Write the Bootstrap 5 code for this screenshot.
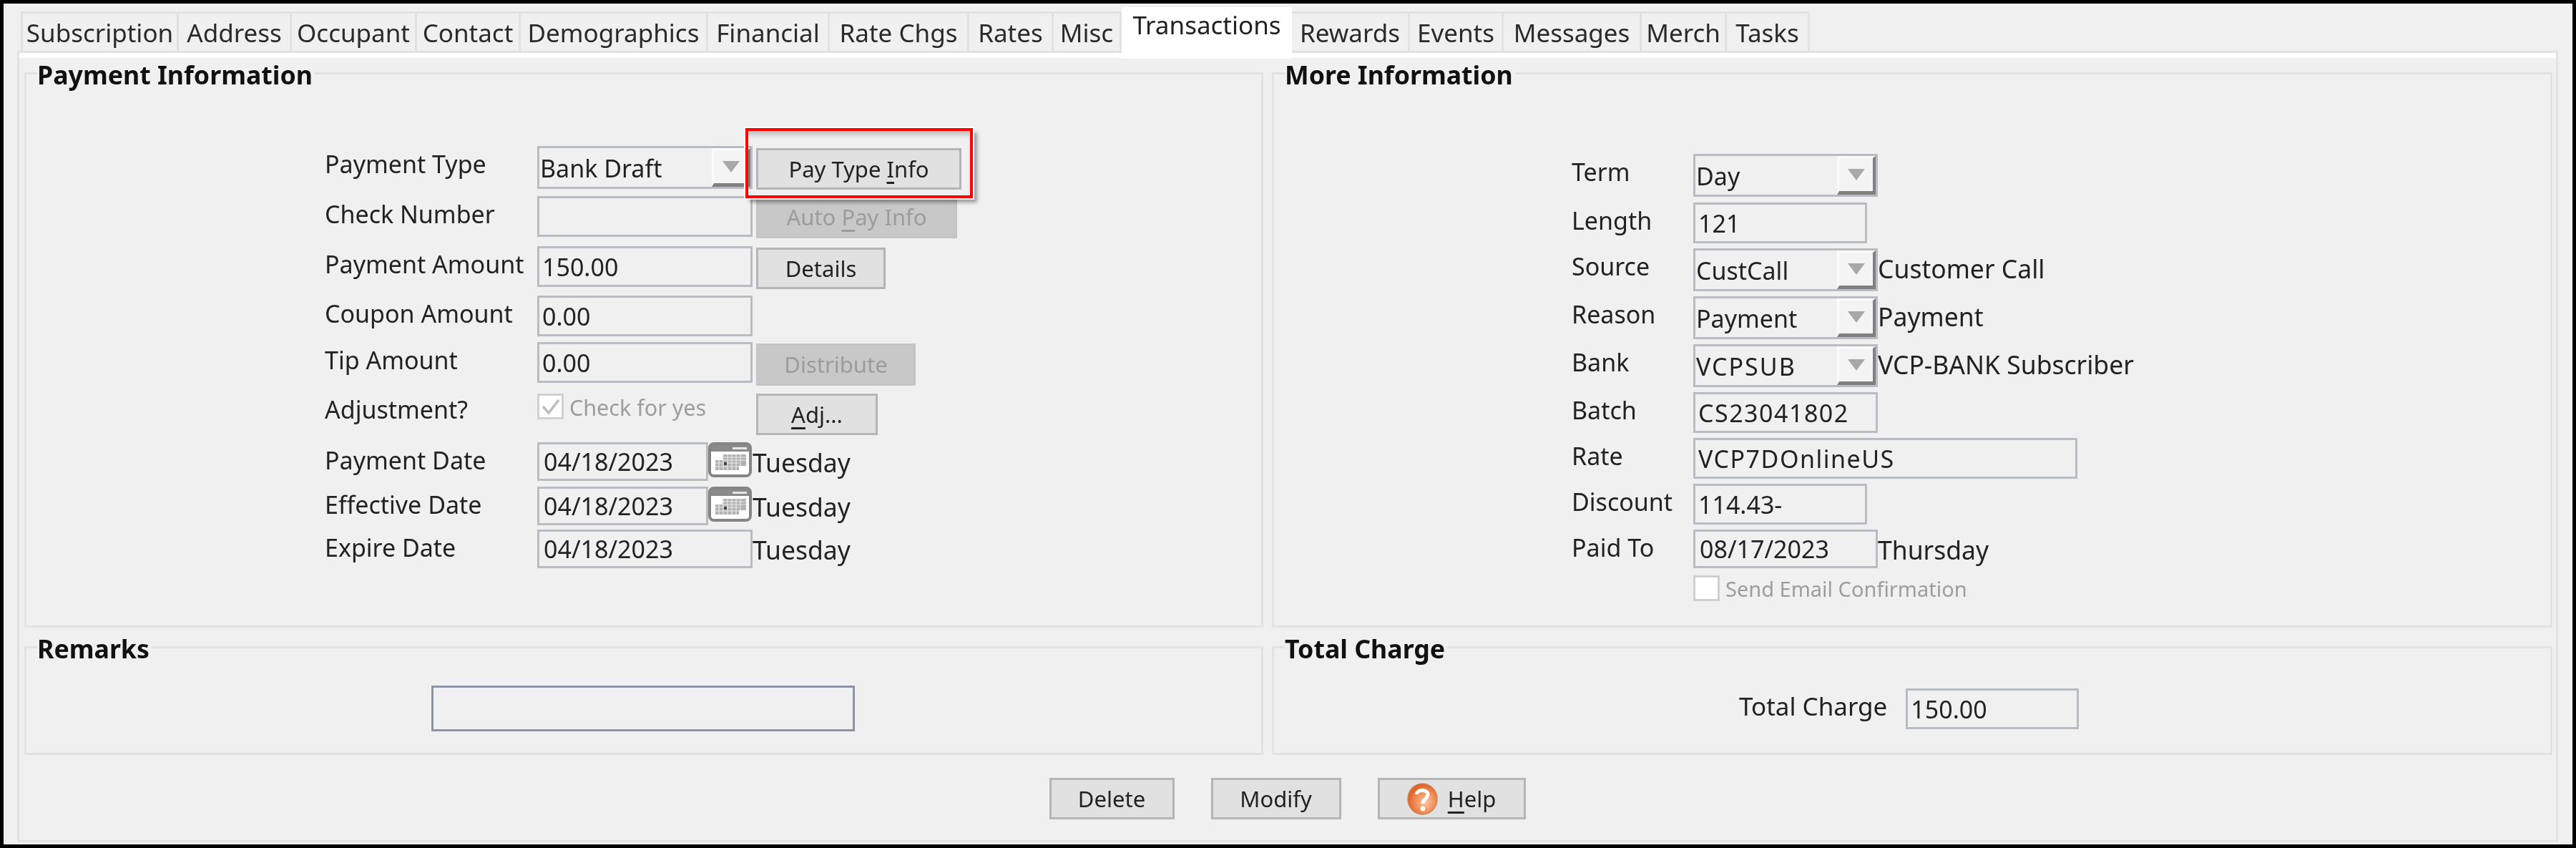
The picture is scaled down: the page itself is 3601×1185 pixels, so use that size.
<!DOCTYPE html>
<html lang="en">
  <head>
    <meta charset="UTF-8" />
    <title>Transactions</title>
    <link href="https://cdn.jsdelivr.net/npm/bootstrap@5.3.0/dist/css/bootstrap.min.css" rel="stylesheet" />
    <style>
      html, body { background: #000; margin: 0; overflow: hidden; }
      body { font-family: "Noto Sans", "DejaVu Sans", sans-serif; font-size: 34px; color: #222; }
      .app-frame { width: 3591px; height: 1175px; margin: 5px; padding: 11px 0 0 19px; background: #f0f0f0; filter: blur(0.7px); }

      /* tabs */
      .cf-tabs { height: 55px; flex-wrap: nowrap; align-items: flex-start; padding-left: 5px; }
      .cf-tabs .nav-link { display: block; height: 55px; padding: 0; font-size: 35px; line-height: 53px; text-align: center; color: #2a2a2a;
        background: #f0f0f0; border: 3px solid #e2e2e2; border-bottom: 0; border-left-width: 0; border-radius: 0; white-space: nowrap; }
      .cf-tabs .nav-item:first-child .nav-link { border-left-width: 3px; }
      .cf-tabs .nav-link.active { position: relative; z-index: 2; height: 72px; margin-top: -6px; line-height: 50px; background: #fff; color: #222; border: 0; }
      .cf-tabs .nav-item:nth-child(1) { width: 221px; }
      .cf-tabs .nav-item:nth-child(2) { width: 158px; }
      .cf-tabs .nav-item:nth-child(3) { width: 175px; }
      .cf-tabs .nav-item:nth-child(4) { width: 145px; }
      .cf-tabs .nav-item:nth-child(5) { width: 262px; }
      .cf-tabs .nav-item:nth-child(6) { width: 170px; }
      .cf-tabs .nav-item:nth-child(7) { width: 195px; }
      .cf-tabs .nav-item:nth-child(8) { width: 118px; }
      .cf-tabs .nav-item:nth-child(9) { width: 95px; }
      .cf-tabs .nav-item:nth-child(10) { width: 238px; }
      .cf-tabs .nav-item:nth-child(11) { width: 165px; }
      .cf-tabs .nav-item:nth-child(12) { width: 131px; }
      .cf-tabs .nav-item:nth-child(13) { width: 193px; }
      .cf-tabs .nav-item:nth-child(14) { width: 119px; }
      .cf-tabs .nav-item:nth-child(15) { width: 116px; }

      /* tab body */
      .tab-body { width: 3552px; height: 1106px; border: 3px solid #e2e2e2; }
      .tab-inner { border-top: 7px solid #fff; height: 100%; padding: 0 8px 0 7px; }
      .box-grid { display: grid; margin-top: -2px; grid-template-columns: 1732px 1790px; column-gap: 12px; row-gap: 4px; grid-template-rows: 798px 174px; }

      /* group boxes */
      .group-box { margin: 0; min-width: 0; border: 3px solid #e2e2e2; padding: 0; }
      .group-box legend { float: none; width: auto; margin: 0 0 0 15px; padding: 4px 3px 0 0; font-size: 35.7px; font-weight: 700; line-height: 42px; color: #111; }
      .pay-wrap { padding: 79px 0 0 417px; }
      .more-wrap { padding: 90px 0 0 416px; }
      .remarks-wrap { padding: 31px 2px 0 0; }
      .total-wrap { padding: 35px 0 0 650px; gap: 26px; }
      .total-wrap .cf-label { font-size: 35px; }

      /* form grids */
      .pay-grid { display: grid; grid-template-columns: 297px 301px auto; grid-template-rows: 70px 70px 69px 65px 72px 68px 62px 60px 55px; }
      .more-grid { display: grid; grid-template-columns: 170px 258px auto; grid-template-rows: 68px 64px 67px 67px 67px 64px 64px 64px 64px 40px; }
      .cf-label { line-height: 50px; white-space: nowrap; }
      .lbl-adj { line-height: 44px; }
      .cf-side { font-size: 35.5px; line-height: 57px; white-space: nowrap; }

      /* fields */
      .cf-field.form-control { display: block; width: 100%; height: 57px; padding: 0 0 0 4px; font-size: 34px; line-height: 1; color: #222; background: #f0f0f0;
        border: 3px solid #babcc4; border-radius: 0; box-shadow: none; }
      .fld-date.form-control { height: 54px; padding-left: 6px; }
      .fld-wide.form-control { letter-spacing: 1.5px; }
      .fld-243 { width: 243px !important; }
      .fld-258 { width: 258px !important; }
      .fld-537 { width: 537px !important; }
      .fld-239 { width: 239px !important; }
      .fld-remarks.form-control { width: 592px; height: 64px; border-color: #8e94a4; }
      .fld-total { width: 242px !important; }
      .cf-combo { height: 60px; width: 100%; padding-left: 1px; line-height: 56px; background: #f0f0f0; border: 3px solid #babcc4; }
      .txt-wide { letter-spacing: 2px; }
      .combo-arrow { width: 54px; height: 54px; background: #f4f4f4; border-top: 3px solid #fbfbfb; border-left: 3px solid #fbfbfb; border-right: 4px solid #808080; border-bottom: 5px solid #808080; }
      .combo-tri { width: 0; height: 0; border-left: 12px solid transparent; border-right: 12px solid transparent; border-top: 16px solid #a8a8a8; }

      /* buttons */
      .cf-btn.btn { height: 58px; padding: 0; font-size: 31px; line-height: 1; color: #222; background: #e1e1e1; border: 3px solid #b5b5b5; border-radius: 0; white-space: nowrap; }
      .cf-btn u { text-decoration-thickness: 3px; text-underline-offset: 6px; }
      .cf-btn.btn:disabled { opacity: 1; color: #9c9c9c; background: #c8c8c8; border-color: #c4c4c4; }
      .btn-cell { margin: 2px 0 0 5px; }
      .btn-cell-pay { margin-top: 3px; }
      .btn-pay { width: 287px; }
      .btn-auto { width: 281px; height: 59px !important; }
      .btn-details { width: 181px; }
      .btn-dist { width: 223px; height: 59px !important; }
      .btn-adj { width: 170px; }
      .btn-del { width: 175px; }
      .btn-mod { width: 182px; }
      .btn-help { width: 207px; gap: 14px; }
      .foot-bar { padding-top: 32px; gap: 51px; }

      .red-note { position: absolute; top: -28px; left: -15px; width: 318px; height: 98px; z-index: 3; border: 4px solid #f00; outline: 2px solid #fff;
        box-shadow: 6px 6px 5px rgba(0, 0, 0, 0.35), inset 0 8px 7px -3px rgba(0, 0, 0, 0.22); pointer-events: none; }

      .cf-check { width: 37px; height: 36px; flex: none; background: #fff; border: 3px solid #d0d0d0; }
      .check-text { font-size: 30.5px; line-height: 38px; color: #9d9d9d; white-space: nowrap; }
      .check-text-sm { font-size: 29px; }
      .cal-icon { flex: none; width: 61px; height: 49px; margin-left: 0; }
    </style>
  </head>
  <body>
    <div class="app-frame">
      <ul class="nav cf-tabs">
        <li class="nav-item"><a class="nav-link" href="#">Subscription</a></li>
        <li class="nav-item"><a class="nav-link" href="#">Address</a></li>
        <li class="nav-item"><a class="nav-link" href="#">Occupant</a></li>
        <li class="nav-item"><a class="nav-link" href="#">Contact</a></li>
        <li class="nav-item"><a class="nav-link" href="#">Demographics</a></li>
        <li class="nav-item"><a class="nav-link" href="#">Financial</a></li>
        <li class="nav-item"><a class="nav-link" href="#">Rate Chgs</a></li>
        <li class="nav-item"><a class="nav-link" href="#">Rates</a></li>
        <li class="nav-item"><a class="nav-link" href="#">Misc</a></li>
        <li class="nav-item"><a class="nav-link active" href="#">Transactions</a></li>
        <li class="nav-item"><a class="nav-link" href="#">Rewards</a></li>
        <li class="nav-item"><a class="nav-link" href="#">Events</a></li>
        <li class="nav-item"><a class="nav-link" href="#">Messages</a></li>
        <li class="nav-item"><a class="nav-link" href="#">Merch</a></li>
        <li class="nav-item"><a class="nav-link" href="#">Tasks</a></li>
      </ul>

      <div class="tab-body">
        <div class="tab-inner">
          <div class="box-grid">
            <!-- Payment Information -->
            <fieldset class="group-box">
              <legend>Payment Information</legend>
              <div class="pay-wrap">
                <div class="pay-grid">
                  <div class="cf-label">Payment Type</div>
                  <div class="cf-combo d-flex justify-content-between">
                    <span>Bank Draft</span>
                    <span class="combo-arrow d-flex align-items-center justify-content-center"><span class="combo-tri"></span></span>
                  </div>
                  <div class="btn-cell btn-cell-pay position-relative">
                    <button class="btn cf-btn btn-pay">Pay Type <u>I</u>nfo</button>
                    <div class="red-note"></div>
                  </div>

                  <div class="cf-label">Check Number</div>
                  <div><input class="form-control cf-field" value="" readonly /></div>
                  <div class="btn-cell mt-0"><button class="btn cf-btn btn-auto" disabled>Auto <u>P</u>ay Info</button></div>

                  <div class="cf-label">Payment Amount</div>
                  <div><input class="form-control cf-field" value="150.00" readonly /></div>
                  <div class="btn-cell"><button class="btn cf-btn btn-details">Details</button></div>

                  <div class="cf-label">Coupon Amount</div>
                  <div><input class="form-control cf-field" value="0.00" readonly /></div>
                  <div></div>

                  <div class="cf-label">Tip Amount</div>
                  <div><input class="form-control cf-field" value="0.00" readonly /></div>
                  <div class="btn-cell"><button class="btn cf-btn btn-dist" disabled>Distribute</button></div>

                  <div class="cf-label lbl-adj">Adjustment?</div>
                  <div class="d-flex align-items-start gap-2 pt-0">
                    <span class="cf-check d-flex align-items-center justify-content-center">
                      <svg width="31" height="30" viewBox="0 0 31 30"><path d="M5 15 L13 24 L27 6" fill="none" stroke="#bdbdbd" stroke-width="3.5" /></svg>
                    </span>
                    <span class="check-text">Check for yes</span>
                  </div>
                  <div class="btn-cell mt-0"><button class="btn cf-btn btn-adj"><u>A</u>dj...</button></div>

                  <div class="cf-label">Payment Date</div>
                  <div class="d-flex align-items-start">
                    <input class="form-control cf-field fld-date fld-239" value="04/18/2023" readonly />
                    <svg class="cal-icon" viewBox="0 0 61 49">
                      <rect x="2" y="2" width="57" height="45" rx="6" fill="#fff" stroke="#858585" stroke-width="4" />
                      <path d="M4 4 H57 V13 H4 Z" fill="#8a8a8a" />
                      <path d="M34 7 H54 V10 H34 Z" fill="#e6e6e6" />
                      <path d="M20 17 H53 V33 H43 V39 H10 V25 H20 Z" fill="#b2b2b2" />
                      <path d="M10 29 H43 M10 34 H43 M20 21 H53 M20 25 H53 M15 25 V39 M21 17 V39 M27 17 V39 M33 17 V39 M39 17 V39 M45 17 V33" stroke="#e8e8e8" stroke-width="1.2" />
                      <rect x="22" y="28" width="4" height="4" fill="#444" />
                    </svg>
                  </div>
                  <div class="cf-side">Tuesday</div>

                  <div class="cf-label">Effective Date</div>
                  <div class="d-flex align-items-start">
                    <input class="form-control cf-field fld-date fld-239" value="04/18/2023" readonly />
                    <svg class="cal-icon" viewBox="0 0 61 49">
                      <rect x="2" y="2" width="57" height="45" rx="6" fill="#fff" stroke="#858585" stroke-width="4" />
                      <path d="M4 4 H57 V13 H4 Z" fill="#8a8a8a" />
                      <path d="M34 7 H54 V10 H34 Z" fill="#e6e6e6" />
                      <path d="M20 17 H53 V33 H43 V39 H10 V25 H20 Z" fill="#b2b2b2" />
                      <path d="M10 29 H43 M10 34 H43 M20 21 H53 M20 25 H53 M15 25 V39 M21 17 V39 M27 17 V39 M33 17 V39 M39 17 V39 M45 17 V33" stroke="#e8e8e8" stroke-width="1.2" />
                      <rect x="22" y="28" width="4" height="4" fill="#444" />
                    </svg>
                  </div>
                  <div class="cf-side">Tuesday</div>

                  <div class="cf-label">Expire Date</div>
                  <div><input class="form-control cf-field fld-date" value="04/18/2023" readonly /></div>
                  <div class="cf-side">Tuesday</div>
                </div>
              </div>
            </fieldset>

            <!-- More Information -->
            <fieldset class="group-box">
              <legend>More Information</legend>
              <div class="more-wrap">
                <div class="more-grid">
                  <div class="cf-label">Term</div>
                  <div class="cf-combo d-flex justify-content-between"><span>Day</span><span class="combo-arrow d-flex align-items-center justify-content-center"><span class="combo-tri"></span></span></div>
                  <div></div>

                  <div class="cf-label">Length</div>
                  <div><input class="form-control cf-field fld-243" value="121" readonly /></div>
                  <div></div>

                  <div class="cf-label">Source</div>
                  <div class="cf-combo d-flex justify-content-between"><span>CustCall</span><span class="combo-arrow d-flex align-items-center justify-content-center"><span class="combo-tri"></span></span></div>
                  <div class="cf-side">Customer Call</div>

                  <div class="cf-label">Reason</div>
                  <div class="cf-combo d-flex justify-content-between"><span>Payment</span><span class="combo-arrow d-flex align-items-center justify-content-center"><span class="combo-tri"></span></span></div>
                  <div class="cf-side">Payment</div>

                  <div class="cf-label">Bank</div>
                  <div class="cf-combo d-flex justify-content-between"><span class="txt-wide">VCPSUB</span><span class="combo-arrow d-flex align-items-center justify-content-center"><span class="combo-tri"></span></span></div>
                  <div class="cf-side">VCP-BANK Subscriber</div>

                  <div class="cf-label">Batch</div>
                  <div><input class="form-control cf-field fld-258 fld-wide" value="CS23041802" readonly /></div>
                  <div></div>

                  <div class="cf-label">Rate</div>
                  <div><input class="form-control cf-field fld-537 fld-wide" value="VCP7DOnlineUS" readonly /></div>
                  <div></div>

                  <div class="cf-label">Discount</div>
                  <div><input class="form-control cf-field fld-243" value="114.43-" readonly /></div>
                  <div></div>

                  <div class="cf-label">Paid To</div>
                  <div><input class="form-control cf-field fld-date fld-258" value="08/17/2023" readonly /></div>
                  <div class="cf-side">Thursday</div>

                  <div></div>
                  <div class="d-flex align-items-start gap-2">
                    <span class="cf-check"></span>
                    <span class="check-text check-text-sm">Send Email Confirmation</span>
                  </div>
                  <div></div>
                </div>
              </div>
            </fieldset>

            <!-- Remarks -->
            <fieldset class="group-box">
              <legend>Remarks</legend>
              <div class="remarks-wrap d-flex justify-content-center">
                <input class="form-control cf-field fld-remarks" value="" readonly />
              </div>
            </fieldset>

            <!-- Total Charge -->
            <fieldset class="group-box">
              <legend>Total Charge</legend>
              <div class="total-wrap d-flex">
                <span class="cf-label">Total Charge</span>
                <input class="form-control cf-field fld-total" value="150.00" readonly />
              </div>
            </fieldset>
          </div>

          <div class="foot-bar d-flex justify-content-center">
            <button class="btn cf-btn btn-del">Delete</button>
            <button class="btn cf-btn btn-mod">Modify</button>
            <button class="btn cf-btn btn-help d-flex align-items-center justify-content-center">
              <svg width="43" height="45" viewBox="0 0 43 45">
                <defs>
                  <radialGradient id="helpGrad" cx="0.6" cy="0.6" r="0.65">
                    <stop offset="0" stop-color="#f9c6a6" />
                    <stop offset="0.55" stop-color="#f08a52" />
                    <stop offset="1" stop-color="#d9561c" />
                  </radialGradient>
                </defs>
                <ellipse cx="21.5" cy="22.5" rx="20.5" ry="21.5" fill="url(#helpGrad)" stroke="#c9885e" stroke-width="1.5" />
                <path d="M13 16 C15 8 30 9 29 17 C28 23 22 22 22 29" fill="none" stroke="#fff" stroke-width="5" />
                <circle cx="22" cy="36" r="3.4" fill="#fff" />
              </svg>
              <span><u>H</u>elp</span>
            </button>
          </div>
        </div>
      </div>
    </div>

    <script src="https://cdn.jsdelivr.net/npm/bootstrap@5.3.0/dist/js/bootstrap.bundle.min.js"></script>
  </body>
</html>
